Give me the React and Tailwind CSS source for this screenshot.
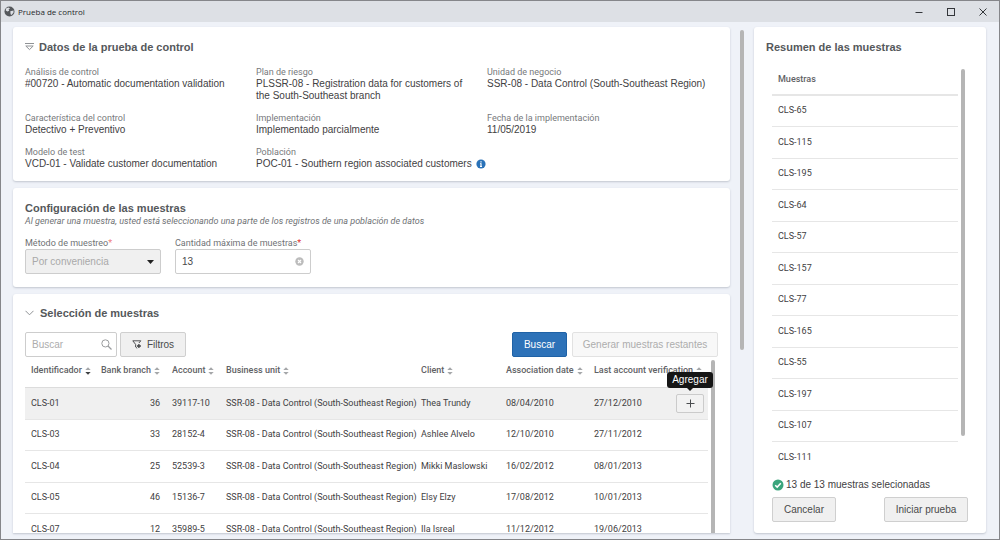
import React from "react";

const details = [
  { label: "Análisis de control", value: "#00720 - Automatic documentation validation" },
  { label: "Plan de riesgo", value: "PLSSR-08 - Registration data for customers of the South-Southeast branch" },
  { label: "Unidad de negocio", value: "SSR-08 - Data Control (South-Southeast Region)" },
  { label: "Característica del control", value: "Detectivo + Preventivo" },
  { label: "Implementación", value: "Implementado parcialmente" },
  { label: "Fecha de la implementación", value: "11/05/2019" },
  { label: "Modelo de test", value: "VCD-01 - Validate customer documentation" },
  { label: "Población", value: "POC-01 - Southern region associated customers", info: true },
];

const unit = "SSR-08 - Data Control (South-Southeast Region)";

const records = [
  { id: "CLS-01", branch: 36, account: "39117-10", client: "Thea Trundy", since: "08/04/2010", verified: "27/12/2010" },
  { id: "CLS-03", branch: 33, account: "28152-4", client: "Ashlee Alvelo", since: "12/10/2010", verified: "27/11/2012" },
  { id: "CLS-04", branch: 25, account: "52539-3", client: "Mikki Maslowski", since: "16/02/2012", verified: "08/01/2013" },
  { id: "CLS-05", branch: 46, account: "15136-7", client: "Elsy Elzy", since: "17/08/2012", verified: "10/01/2013" },
  { id: "CLS-07", branch: 12, account: "35989-5", client: "Ila Isreal", since: "11/12/2012", verified: "19/06/2013" },
];

const columns = [
  { name: "Identificador", width: "w-[71px]", sorted: true },
  { name: "Bank branch", width: "w-[70px]", right: true },
  { name: "Account", width: "w-[54px]" },
  { name: "Business unit", width: "w-[195px]" },
  { name: "Client", width: "w-[85px]" },
  { name: "Association date", width: "w-[88px]" },
  { name: "Last account verification", width: "" },
];

const samples = [
  "CLS-65", "CLS-115", "CLS-195", "CLS-64", "CLS-57", "CLS-157",
  "CLS-77", "CLS-165", "CLS-55", "CLS-197", "CLS-107", "CLS-111",
];

const card = "rounded-[3px] bg-white shadow-[0_1px_2px_rgba(60,70,90,0.25)]";
const heading = "text-[11px] leading-4 font-bold text-[#55585b]";
const small = "font-[Roboto,Arial,sans-serif] text-[9px]";
const fieldLabel = `${small} block leading-3 text-[#6f7275]`;
const grayButton =
  "h-[25px] rounded-[2px] border border-[#cfcfcf] bg-[#f0f0f0] text-[10px] text-[#4a4a4a] flex items-center justify-center";

function TitleBar() {
  return (
    <header className="flex h-[21px] shrink-0 items-center justify-between bg-[#dde0e5] pl-[3px] pr-3">
      <div className="flex items-center gap-[3px]">
        <svg width="11" height="11" viewBox="0 0 11 11">
          <circle cx="5.5" cy="5.5" r="5" fill="#55585c" />
          <path d="M2 2.6 4.3 1.4 6 2.2 4.6 3.6 5.2 4.8 3.4 5.6 1.8 4.6Z" fill="#dde0e5" />
          <path d="M6.3 5.2 9.6 4.6 9.4 6.8 7.5 9 6.6 8.2Z" fill="#dde0e5" />
        </svg>
        <h1 className="font-['Open_Sans',sans-serif] text-[8px] leading-3 text-[#26282b]">Prueba de control</h1>
      </div>
      <div className="flex items-center gap-6 text-[#33363a]">
        <button aria-label="Minimizar" className="flex h-3 w-2 items-center">
          <svg width="8" height="8" viewBox="0 0 8 8">
            <path d="M0.5 4.5h7" stroke="currentColor" />
          </svg>
        </button>
        <button aria-label="Maximizar" className="flex h-3 w-2 items-center">
          <svg width="8" height="8" viewBox="0 0 8 8">
            <rect x="0.5" y="0.5" width="7" height="7" fill="none" stroke="currentColor" />
          </svg>
        </button>
        <button aria-label="Cerrar" className="flex h-3 w-2 items-center">
          <svg width="8" height="8" viewBox="0 0 8 8">
            <path d="M0.5 0.5l7 7M7.5 0.5l-7 7" stroke="currentColor" />
          </svg>
        </button>
      </div>
    </header>
  );
}

function DetailsCard() {
  return (
    <section className={`${card} shrink-0 px-3 pt-3 pb-[11px]`}>
      <div className="flex items-center gap-[5px]">
        <svg width="9" height="8" viewBox="0 0 9 8" fill="none" stroke="#8f9295">
          <path d="M0 0.5h9M0.8 3 4.5 6.6 8.2 3Z" />
        </svg>
        <h2 className={heading}>Datos de la prueba de control</h2>
      </div>
      <dl className="mt-[11px] grid grid-cols-3 gap-y-[10px]">
        {details.map((d) => (
          <div key={d.label} className={d.info ? "" : "pr-3"}>
            <dt className={`${small} leading-3 text-[#77797c]`}>{d.label}</dt>
            <dd className="flex items-center gap-1 text-[10px] leading-3 text-[#3f4143]">
              {d.value}
              {d.info && (
                <svg width="10" height="10" viewBox="0 0 10 10" className="shrink-0">
                  <circle cx="5" cy="5" r="4.6" fill="#2a72b8" />
                  <path d="M5 2.2v1.3M5 4.3v3.2M4.2 4.5H5M4 7.5h2" stroke="#fff" strokeWidth="1.2" />
                </svg>
              )}
            </dd>
          </div>
        ))}
      </dl>
    </section>
  );
}

function ConfigCard() {
  return (
    <section className={`${card} shrink-0 px-3 pt-3 pb-[13px]`}>
      <h2 className={heading}>Configuración de las muestras</h2>
      <p className={`${small} leading-[10px] text-[#6f7275] italic`}>
        Al generar una muestra, usted está seleccionando una parte de los registros de una población de datos
      </p>
      <div className="mt-[11px] flex gap-[14px]">
        <div className="w-[136px]">
          <label htmlFor="metodo" className={fieldLabel}>
            Método de muestreo<span className="text-[#f08080]">*</span>
          </label>
          <div className="relative">
            <select
              id="metodo"
              disabled
              className="block h-[25px] w-full appearance-none rounded-[2px] border border-[#cdcdcd] bg-[#f0f0f0] px-[6px] text-[10px] text-[#a9a9a9] opacity-100"
            >
              <option>Por conveniencia</option>
            </select>
            <svg width="7" height="4" viewBox="0 0 7 4" className="pointer-events-none absolute top-[11px] right-[7px]">
              <path d="M0 0h7L3.5 4Z" fill="#222" />
            </svg>
          </div>
        </div>
        <div className="w-[136px]">
          <label htmlFor="cantidad" className={fieldLabel}>
            Cantidad máxima de muestras<span className="text-[#e03030]">*</span>
          </label>
          <div className="relative">
            <input
              id="cantidad"
              defaultValue="13"
              className="block h-[25px] w-full rounded-[2px] border border-[#cdcdcd] bg-white px-[6px] text-[10px] text-[#4a4a4a]"
            />
            <button aria-label="Limpiar" className="absolute top-2 right-[7px]">
              <svg width="9" height="9" viewBox="0 0 9 9" className="block">
                <circle cx="4.5" cy="4.5" r="4.2" fill="#bcbcbc" />
                <path d="M3 3l3 3M6 3l-3 3" stroke="#fff" strokeWidth="1.2" />
              </svg>
            </button>
          </div>
        </div>
      </div>
    </section>
  );
}

function SortIcon({ sorted }) {
  return (
    <svg width="6" height="8" viewBox="0 0 6 8" className="shrink-0">
      <path d="M0.3 3 3 0.2 5.7 3Z" fill="#a5a7a9" />
      <path d="M0.3 5 3 7.8 5.7 5Z" fill={sorted ? "#3f4143" : "#a5a7a9"} />
    </svg>
  );
}

function AddButton() {
  return (
    <div className="relative">
      <button
        aria-label="Agregar"
        className="flex h-[19px] w-7 items-center justify-center rounded-[2px] border border-[#cbcbcb] bg-[#f2f2f2]"
      >
        <svg width="9" height="9" viewBox="0 0 9 9">
          <path d="M0.5 4.5h8M4.5 0.5v8" stroke="#4a4c4f" />
        </svg>
      </button>
      <div
        role="tooltip"
        className="absolute bottom-[25px] left-1/2 z-10 flex h-4 w-[46px] -translate-x-1/2 items-center justify-center rounded-[3px] bg-[#161616] font-['Liberation_Sans',Arial,sans-serif] text-[10px] text-white"
      >
        Agregar
        <svg width="6" height="3" viewBox="0 0 6 3" className="absolute top-full">
          <path d="M0 0h6L3 3Z" fill="#161616" />
        </svg>
      </div>
    </div>
  );
}

function SelectionCard() {
  const td = "px-[6px] py-0";
  return (
    <section className={`${card} flex min-h-0 flex-1 flex-col overflow-hidden rounded-b-none px-3 pt-[11px]`}>
      <div className="flex items-center gap-[6px]">
        <svg width="9" height="6" viewBox="0 0 9 6" fill="none" stroke="#8f9295">
          <path d="M0.5 0.8 4.5 4.8 8.5 0.8" />
        </svg>
        <h2 className={heading}>Selección de muestras</h2>
      </div>
      <div className="mt-[11px] flex gap-[3px]">
        <div className="relative w-[92px]">
          <input
            aria-label="Buscar muestras"
            placeholder="Buscar"
            className="block h-[25px] w-full rounded-[2px] border border-[#cdcdcd] bg-white px-[6px] text-[10px] text-[#4a4a4a] placeholder:text-[#adadad]"
          />
          <svg
            width="11"
            height="11"
            viewBox="0 0 11 11"
            fill="none"
            stroke="#9a9c9e"
            className="pointer-events-none absolute top-[7px] right-[5px]"
          >
            <circle cx="4.4" cy="4.4" r="3.6" />
            <path d="M7 7l3.5 3.5" strokeWidth="1.3" />
          </svg>
        </div>
        <button className={`${grayButton} w-[66px] gap-[5px]`}>
          <svg width="10" height="9" viewBox="0 0 10 9" fill="none" stroke="#3f4143">
            <path d="M5.2 8.3 3.6 7V4.4L0.8 0.8h8L6.9 3" strokeWidth="0.9" />
            <path d="M6.9 4v4M4.9 6h4" strokeWidth="1.3" />
          </svg>
          Filtros
        </button>
        <div className="flex flex-1 justify-end gap-[5px]">
          <button className="h-[25px] w-[55px] rounded-[2px] border border-[#1f62a6] bg-[#2d72b8] text-[10px] text-white">
            Buscar
          </button>
          <button
            disabled
            className="h-[25px] w-[146px] rounded-[2px] border border-[#e2e2e2] bg-[#f8f8f8] text-[10px] text-[#adadad]"
          >
            Generar muestras restantes
          </button>
        </div>
      </div>
      <div className="mt-[3px] flex min-h-0 flex-1 gap-[3px] overflow-hidden">
        <div className="min-w-0 flex-1">
          <table className={`${small} w-full table-fixed border-collapse leading-[9px] text-[#3f4143]`}>
            <thead>
              <tr className="h-[27px] border-b border-[#dcdcdc]">
                {columns.map((c) => (
                  <th key={c.name} className={`${c.width} px-[6px] pt-0 pb-[5px] text-left font-medium whitespace-nowrap text-[#5f6265]`}>
                    <span className={`flex items-center gap-[3px] ${c.right ? "justify-end" : ""}`}>
                      {c.name}
                      <SortIcon sorted={c.sorted} />
                    </span>
                  </th>
                ))}
              </tr>
            </thead>
            <tbody>
              {records.map((r, i) => (
                <tr key={r.id} className="h-8 border-b border-[#e6e6e6] whitespace-nowrap first:bg-[#f0f0f0] even:h-[31px]">
                  <td className={td}>{r.id}</td>
                  <td className={`${td} text-right`}>{r.branch}</td>
                  <td className={td}>{r.account}</td>
                  <td className={td}>{unit}</td>
                  <td className={td}>{r.client}</td>
                  <td className={td}>{r.since}</td>
                  <td className="py-0 pr-1 pl-[6px]">
                    <div className="flex items-center justify-between">
                      {r.verified}
                      {i === 0 && <AddButton />}
                    </div>
                  </td>
                </tr>
              ))}
            </tbody>
          </table>
        </div>
        <div className="mr-[3px] w-1 rounded-t-full bg-[#b5b5b5]" />
      </div>
    </section>
  );
}

function Summary() {
  return (
    <aside className={`${card} flex w-[232px] shrink-0 flex-col px-3 pt-3 pb-[11px]`}>
      <h2 className={heading}>Resumen de las muestras</h2>
      <div className="mt-3 ml-[6px] flex min-h-0 flex-1 gap-[3px] overflow-hidden">
        <table className={`${small} w-[186px] border-collapse self-start leading-[9px] text-[#3f4143]`}>
          <thead>
            <tr className="h-7 border-b-2 border-[#e6e6e6]">
              <th className="px-[6px] pt-0 pb-[2px] text-left font-medium text-[#5f6265]">Muestras</th>
            </tr>
          </thead>
          <tbody>
            {samples.map((s) => (
              <tr key={s} className="h-8 border-b border-[#e6e6e6] last:border-b-0 odd:h-[31px]">
                <td className="px-[6px] py-0">{s}</td>
              </tr>
            ))}
          </tbody>
        </table>
        <div className="mt-[2px] mb-[43px] w-1 rounded-full bg-[#b5b5b5]" />
      </div>
      <div className="mx-[6px]">
        <p className="flex items-center gap-[2px] text-[10px] leading-3 text-[#3f4143]">
          <svg width="12" height="12" viewBox="0 0 12 12">
            <circle cx="6" cy="6" r="5.5" fill="#3aa57c" />
            <path d="M3.2 6.2 5.2 8.1 8.8 4.3" fill="none" stroke="#fff" strokeWidth="1.5" />
          </svg>
          13 de 13 muestras selecionadas
        </p>
        <div className="mt-[6px] flex justify-between">
          <button className={`${grayButton} w-16`}>Cancelar</button>
          <button className={`${grayButton} w-[84px]`}>Iniciar prueba</button>
        </div>
      </div>
    </aside>
  );
}

export default function App() {
  return (
    <div className="flex h-screen flex-col overflow-hidden border border-[#85868a] bg-[#eff2f8] font-['Liberation_Sans',Arial,sans-serif]">
      <TitleBar />
      <main className="flex min-h-0 flex-1 pt-[5px] pr-[13px] pb-[6px] pl-3">
        <div className="flex min-w-0 flex-1 flex-col gap-[7px]">
          <DetailsCard />
          <ConfigCard />
          <SelectionCard />
        </div>
        <div className="mt-[3px] mr-[10px] ml-[10px] h-80 w-1 shrink-0 rounded-full bg-[#b5b5b5]" />
        <Summary />
      </main>
    </div>
  );
}
